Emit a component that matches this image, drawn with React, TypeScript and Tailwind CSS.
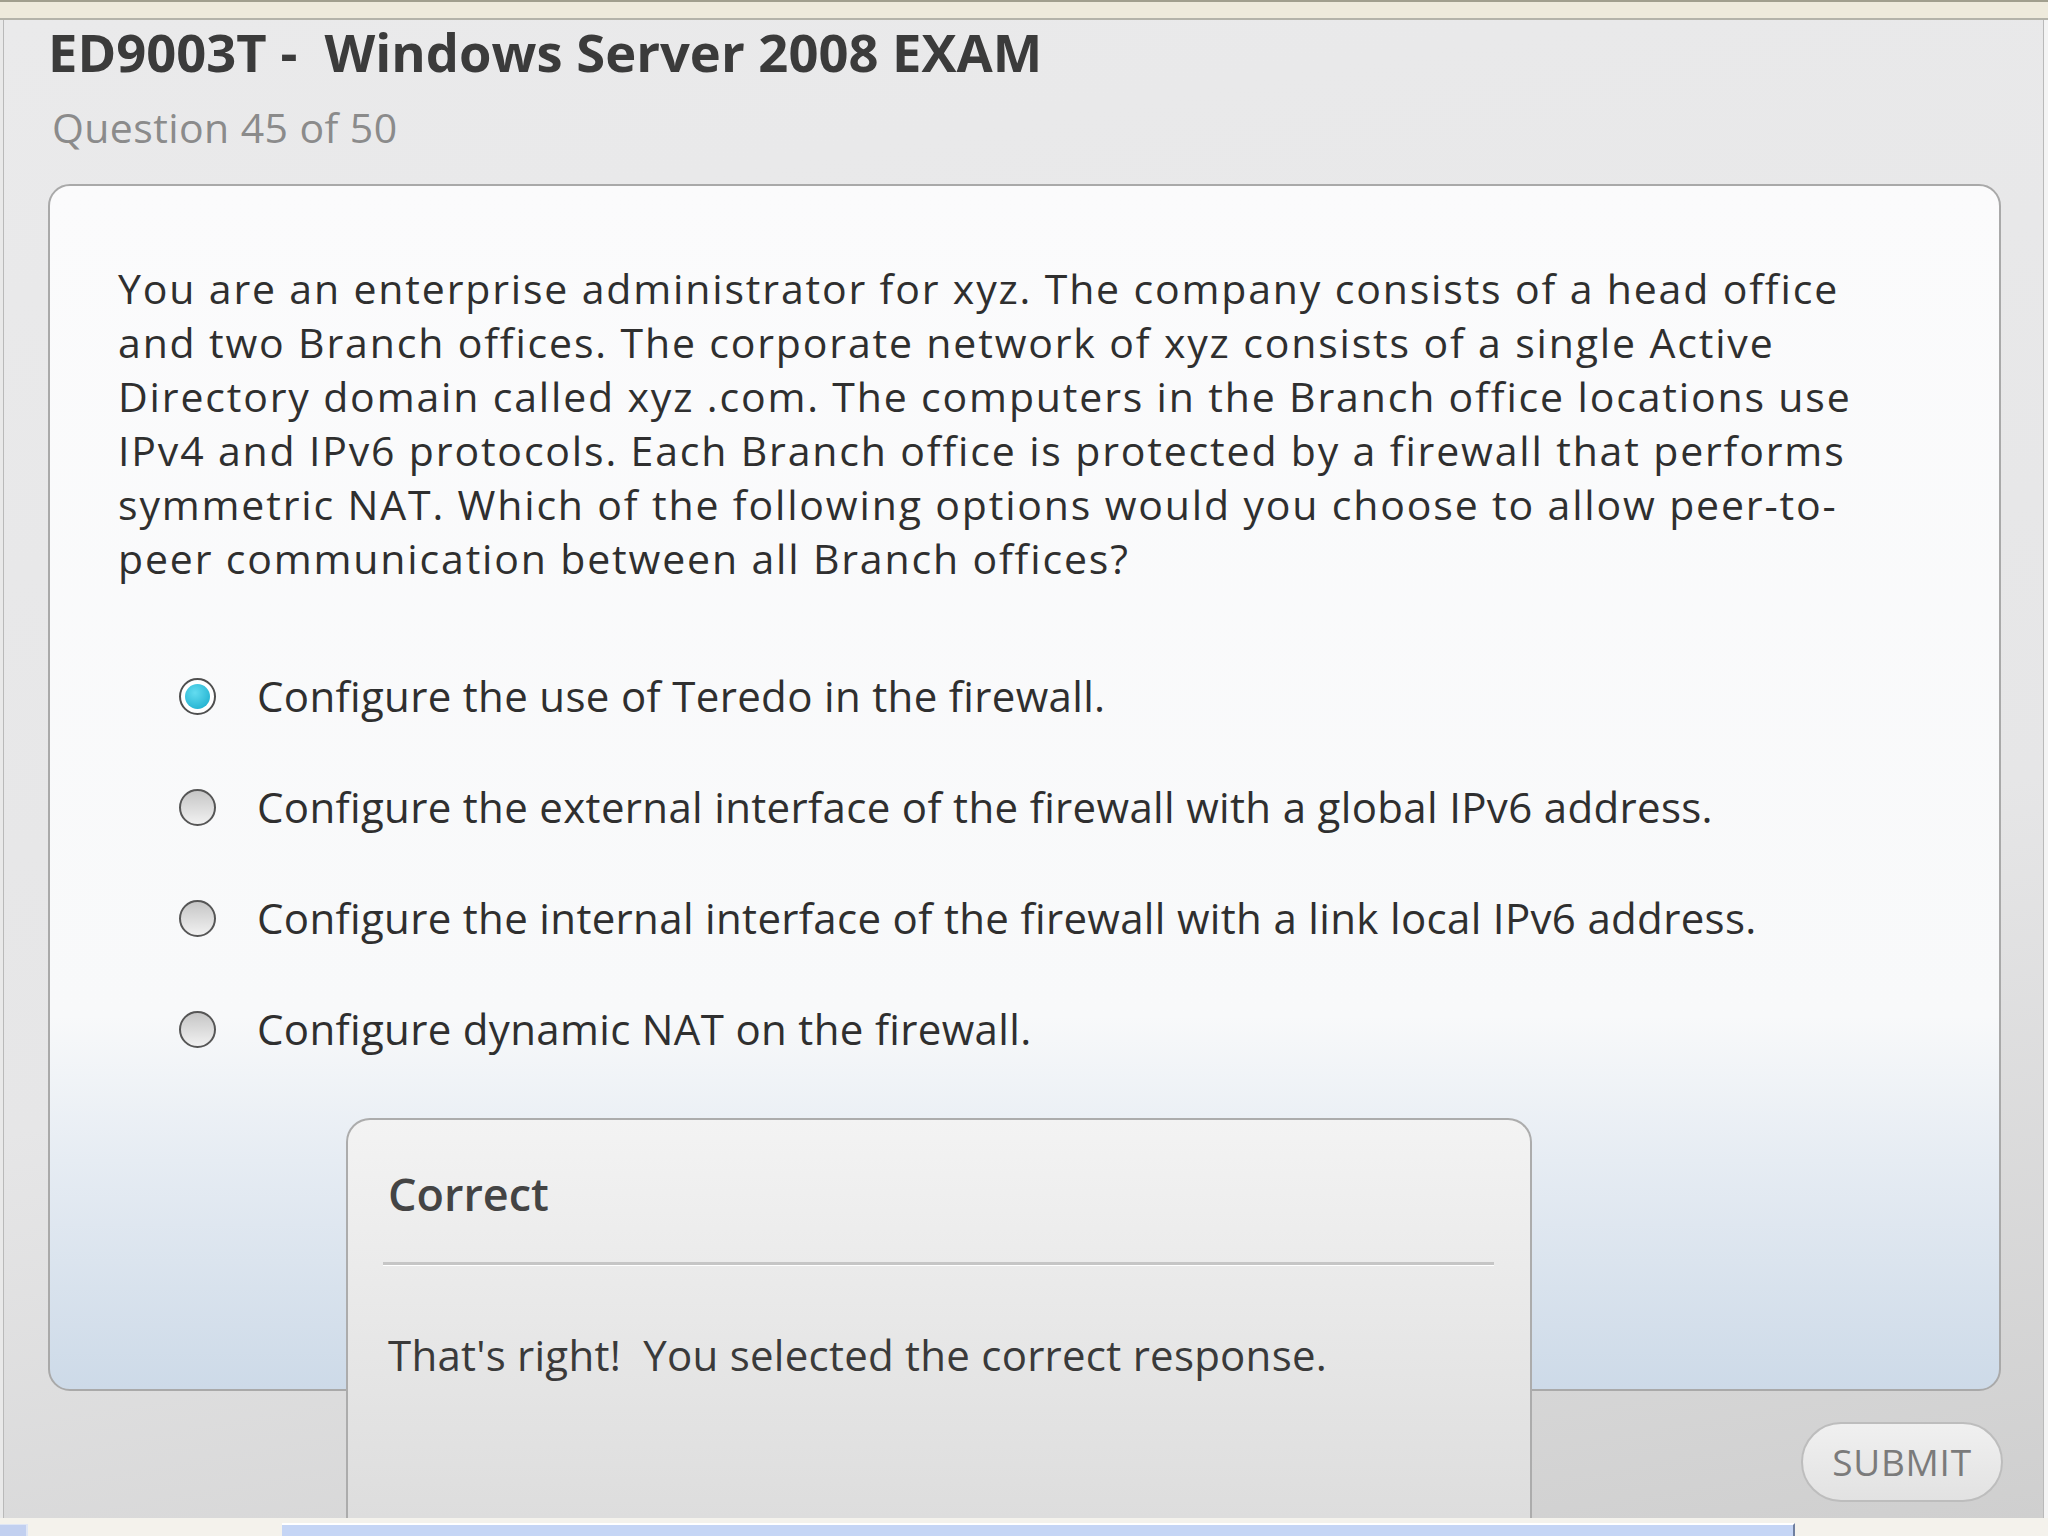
const question = [
  "You are an enterprise administrator for xyz. The company consists of a head office",
  "and two Branch offices. The corporate network of xyz consists of a single Active",
  "Directory domain called xyz .com. The computers in the Branch office locations use",
  "IPv4 and IPv6 protocols. Each Branch office is protected by a firewall that performs",
  "symmetric NAT. Which of the following options would you choose to allow peer-to-",
  "peer communication between all Branch offices?",
];

const options = [
  { label: "Configure the use of Teredo in the firewall.", selected: true },
  { label: "Configure the external interface of the firewall with a global IPv6 address.", selected: false },
  { label: "Configure the internal interface of the firewall with a link local IPv6 address.", selected: false },
  { label: "Configure dynamic NAT on the firewall.", selected: false },
];

function Radio({ selected }: { selected: boolean }) {
  if (selected) {
    return (
      <span className="flex h-[37px] w-[37px] shrink-0 items-center justify-center rounded-full border-2 border-[#4f4f4f] bg-white">
        <span className="block h-[25px] w-[25px] rounded-full bg-[radial-gradient(circle_at_40%_35%,#63dcf0,#14a9ca)]" />
      </span>
    );
  }
  return (
    <span className="block h-[37px] w-[37px] shrink-0 rounded-full border-2 border-[#565656] bg-[linear-gradient(to_bottom,#c6c6c6,#f1f1f1)]" />
  );
}

export default function App() {
  return (
    <div className="flex h-screen w-full flex-col bg-[#f4f2ec] font-['Open_Sans','Noto_Sans',sans-serif]">
      {/* window chrome strip */}
      <div className="h-[20px] shrink-0 border-t-[2px] border-b-[2px] border-t-[#a19f8e] border-b-[#b4b3aa] bg-[#eeeadc]" />

      <div className="flex min-h-0 flex-1 bg-[#f2f2f2]">
        <div className="w-[3px] shrink-0 bg-[#e9e9e9]" />
        <main className="relative flex min-w-0 flex-1 flex-col border-x border-[#b9b9b9] bg-[linear-gradient(170deg,#eaeaeb_0%,#e6e6e7_60%,#cfcfcf_100%)] pl-[44px] pr-[42px] pt-[2px]">
          <h1 className="text-[52.5px] font-bold leading-[60px] text-[#3b3b3b] whitespace-pre">
            {"ED9003T -  Windows Server 2008 EXAM"}
          </h1>
          <p className="mt-[21px] pl-[4px] text-[41px] leading-[48px] tracking-[0.01em] text-[#8b8b8b]">Question 45 of 50</p>

          <section className="mt-[33px] flex-1 rounded-[22px] border-2 border-[#a9a9a9] bg-[linear-gradient(to_bottom,#fbfbfc_0%,#f8f9fa_69%,#e6ecf3_81%,#cddae8_100%)] pl-[68px] pt-[75px]">
            <p className="text-[41px] leading-[54px] tracking-[0.045em] text-[#2f2f2f]">
              {question.map((line, i) => (
                <span key={i} className="block whitespace-nowrap">
                  {line}
                </span>
              ))}
            </p>

            <div className="ml-[61px] mt-[84px] flex flex-col gap-[57px]">
              {options.map((opt) => (
                <label key={opt.label} className="flex h-[54px] items-center gap-[41px]">
                  <Radio selected={opt.selected} />
                  <span className="whitespace-nowrap text-[42px] leading-[54px] tracking-[0.008em] text-[#2f2f2f]">
                    {opt.label}
                  </span>
                </label>
              ))}
            </div>
          </section>

          <div className="flex justify-end pb-[16px] pt-[31px]">
            <button
              type="button"
              className="-mr-[2px] h-[80px] w-[202px] rounded-full border-2 border-[#bdbdbd] bg-[linear-gradient(to_bottom,#f0f0f0,#e2e2e2)] text-[37px] tracking-[0.02em] text-[#7b7b7b]"
            >
              SUBMIT
            </button>
          </div>

          {/* feedback popup */}
          <div className="absolute bottom-0 left-[342px] top-[1098px] w-[1186px] rounded-t-[24px] border-x-2 border-t-2 border-[#acacac] bg-[linear-gradient(to_bottom,#f3f3f3,#dddddd)] pl-[40px] pr-[36px] pt-[46px]">
            <h2 className="text-[45px] font-semibold leading-[56px] text-[#444]">Correct</h2>
            <div className="-ml-[5px] mt-[40px] h-[3px] bg-[#c6c6c6] shadow-[0_1px_0_#ffffff]" />
            <p className="mt-[63px] whitespace-pre text-[42px] leading-[54px] tracking-[0.006em] text-[#3a3a3a]">
              {"That's right!  You selected the correct response."}
            </p>
          </div>
        </main>
        <div className="w-[4px] shrink-0 bg-[#f4f4f4]" />
      </div>

      {/* taskbar strip */}
      <div className="flex h-[18px] shrink-0 items-end">
        <div className="h-[12px] w-[28px] border-r-2 border-t border-[#dfe6f5] bg-[#c2d0f0]" />
        <div className="w-[254px]" />
        <div className="h-[13px] w-[1513px] border-r-2 border-t-2 border-r-[#6f7f9f] border-t-white bg-[#c5d5f5]" />
      </div>
    </div>
  );
}
